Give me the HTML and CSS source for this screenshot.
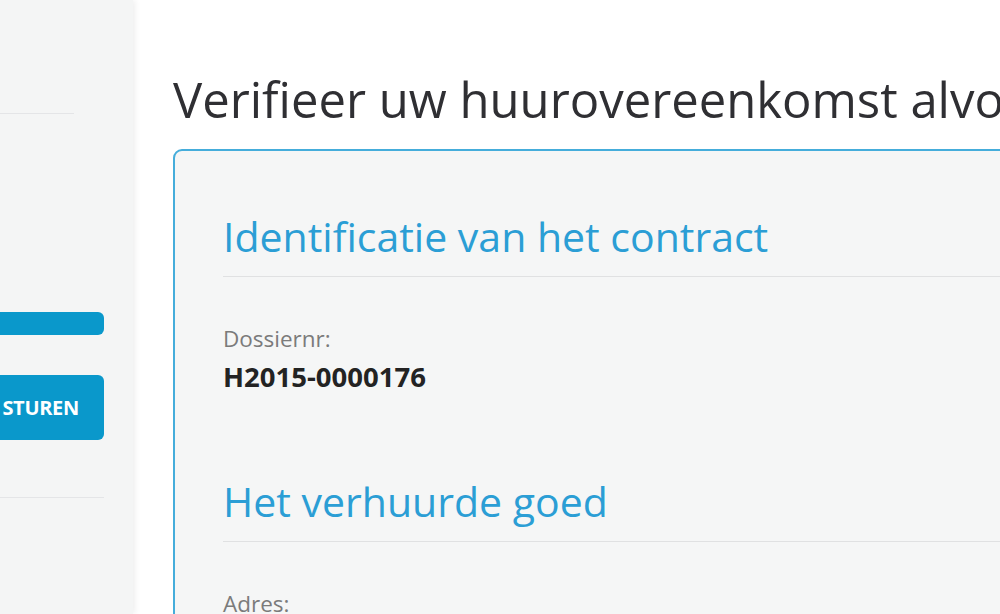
FILE: index.html
```html
<!DOCTYPE html>
<html lang="nl">
<head>
<meta charset="utf-8">
<title>Verifieer uw huurovereenkomst</title>
<link rel="stylesheet" href="styles.css">
</head>
<body>
<div class="page">
  <aside class="sidebar">
    <div class="side-rule short"></div>
    <div class="side-bar"></div>
    <div class="side-button">STUREN</div>
    <div class="side-rule"></div>
  </aside>
  <main class="main">
    <h1 class="title">Verifieer uw huurovereenkomst alvorens te ondertekenen</h1>
    <section class="card">
      <h2 class="section-title">Identificatie van het contract</h2>
      <div class="field">
        <div class="label">Dossiernr:</div>
        <div class="value">H2015-0000176</div>
      </div>
      <h2 class="section-title second">Het verhuurde goed</h2>
      <div class="field">
        <div class="label">Adres:</div>
        <div class="value">Kerkstraat 12</div>
      </div>
    </section>
  </main>
</div>
</body>
</html>
```

FILE: styles.css
```css
html, body {
  margin: 0;
  padding: 0;
  background: #ffffff;
  font-family: "Open Sans", "Noto Sans", sans-serif;
}

.page {
  display: flex;
  width: 1000px;
  height: 614px;
  overflow: hidden;
}

.sidebar {
  flex: 0 0 133px;
  background: #f4f5f5;
  box-shadow: 2px 0 6px rgba(0, 0, 0, 0.07);
  display: flex;
  flex-direction: column;
  padding-top: 113px;
  box-sizing: border-box;
  position: relative;
  z-index: 1;
}

.side-rule {
  width: 104px;
  height: 1px;
  background: #e4e5e7;
  margin-top: 57px;
}

.side-rule.short {
  width: 74px;
  margin-top: 0;
}

.side-bar {
  width: 104px;
  height: 23px;
  margin-top: 198px;
  background: #0a98cb;
  border-radius: 0 6px 6px 0;
}

.side-button {
  width: 104px;
  height: 65px;
  margin-top: 40px;
  background: #0a98cb;
  border-radius: 0 6px 6px 0;
  color: #ffffff;
  font-weight: 700;
  font-size: 20px;
  display: flex;
  align-items: center;
  justify-content: flex-end;
  padding-right: 25px;
  box-sizing: border-box;
  letter-spacing: -0.3px;
}

.main {
  flex: 1 1 auto;
  padding-left: 40px;
  min-width: 0;
  overflow: hidden;
}

.title {
  margin: 69px 0 0 0;
  font-size: 49px;
  line-height: 60px;
  font-weight: 400;
  color: #2f2f33;
  white-space: nowrap;
  height: 60px;
  margin-bottom: 20px;
}

.card {
  width: 1100px;
  border: 2px solid #45addb;
  border-radius: 9px;
  background: #f5f6f6;
  padding: 60px 0 0 48px;
  box-sizing: border-box;
  height: 600px;
}

.section-title {
  margin: 0;
  font-size: 41px;
  line-height: 50px;
  font-weight: 400;
  color: #2b9ed5;
  padding-bottom: 15px;
  border-bottom: 1px solid #e0e1e2;
  white-space: nowrap;
}

.section-title.second {
  margin-top: 82px;
}

.field {
  padding-top: 47px;
}

.label {
  font-size: 22.5px;
  line-height: 30px;
  color: #7b7b7b;
}

.value {
  margin-top: 6px;
  font-size: 27.5px;
  line-height: 34px;
  font-weight: 700;
  color: #232323;
}
```
